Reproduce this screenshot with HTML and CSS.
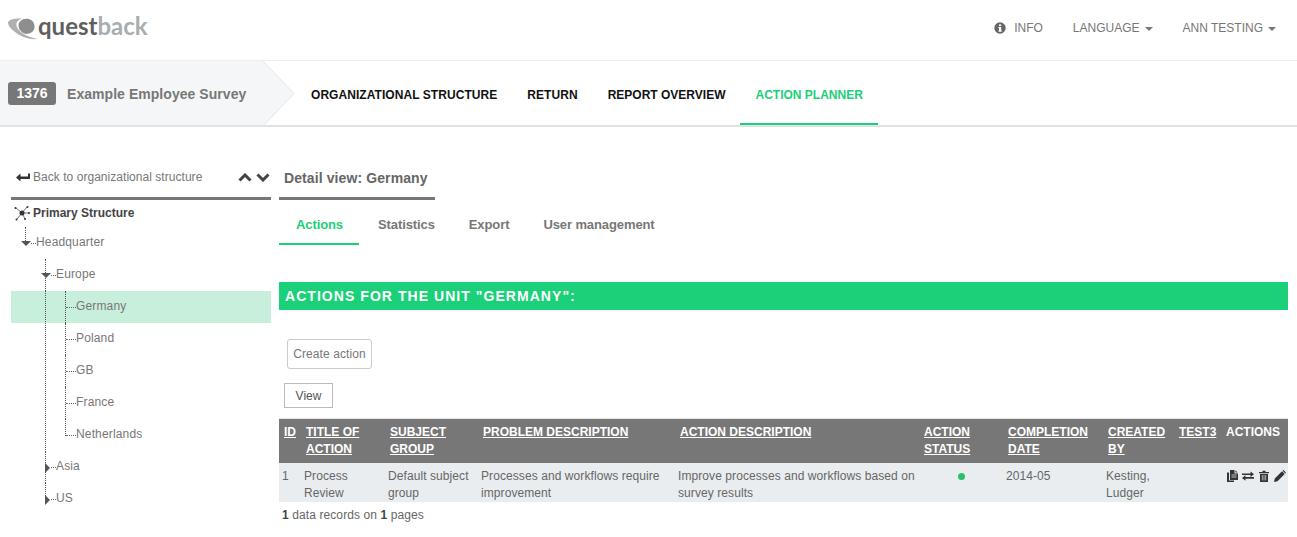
FILE: index.html
```html
<!DOCTYPE html>
<html lang="en">
<head>
<meta charset="utf-8">
<title>Questback</title>
<link rel="stylesheet" href="styles.css">
</head>
<body>
<header class="topbar">
  <a class="logo">
    <svg class="logo-mark" viewBox="0 0 30 22" width="30" height="22"><path d="M0 4C2 1 8 0 14 .5C9 2 7 6 9.500 10C12 15 20 19 30 21C20 22 12 18 7 14C3 11 0 8 0 4z" fill="#b0b0b0"/><path d="M14.500 1.500C20-.5 26 2 26.500 8C27 13 23 16 18 16C14 15 10.500 12 10.500 7C10.500 5 12 3 14.500 1.500z" fill="#8e8e8e"/></svg>
    <span class="logo-text"><span class="logo-dark">quest</span><span class="logo-light">back</span></span>
  </a>
  <nav class="topnav">
    <a class="topnav-item"><svg class="info-icon" viewBox="0 0 12 12" width="12" height="12"><circle cx="6" cy="6" r="5.700" fill="#666"/><rect x="5" y="5" width="2.200" height="4.400" fill="#fff"/><rect x="4.400" y="5" width="1.500" height="1" fill="#fff"/><rect x="4.400" y="8.600" width="3.400" height="1" fill="#fff"/><rect x="5" y="2.400" width="2.200" height="1.700" fill="#fff"/></svg>INFO</a>
    <a class="topnav-item">LANGUAGE<span class="caret"></span></a>
    <a class="topnav-item">ANN TESTING<span class="caret"></span></a>
  </nav>
</header>

<div class="crumbbar">
  <div class="survey">
    <span class="survey-id">1376</span>
    <span class="survey-name">Example Employee Survey</span>
    <svg class="survey-arrow" viewBox="0 0 32 65" width="32" height="65" preserveAspectRatio="none"><path d="M0 0L31 32.500 0 65z" fill="#f5f6f8"/><path d="M0 0L31 32.500 0 65" fill="none" stroke="#e6e6e6"/></svg>
  </div>
  <nav class="mainnav">
    <a class="mainnav-item">ORGANIZATIONAL STRUCTURE</a>
    <a class="mainnav-item">RETURN</a>
    <a class="mainnav-item tight">REPORT OVERVIEW</a>
    <a class="mainnav-item tight active">ACTION PLANNER</a>
  </nav>
</div>

<div class="page">
  <aside class="sidebar">
    <div class="side-head">
      <a class="back">
        <svg viewBox="0 0 14 10" width="14" height="10"><path d="M0 5.500L4.500 1.500V4.500H12V1.500H14V7H4.500V9.500z" fill="#333"/></svg>
        Back to organizational structure
      </a>
      <span class="chevrons">
        <svg viewBox="0 0 14 9" width="14" height="9"><path d="M1.500 7.500L7 2l5.500 5.500" fill="none" stroke="#444" stroke-width="3"/></svg>
        <svg viewBox="0 0 14 9" width="14" height="9"><path d="M1.500 1.500L7 7l5.500-5.500" fill="none" stroke="#444" stroke-width="3"/></svg>
      </span>
    </div>
    <div class="tree-root">
      <svg viewBox="0 0 16 16" width="16" height="16"><g stroke="#555" stroke-width=".8"><path d="M8 8L2 3M8 8L13 2M8 8L3 14M8 8L15 8M8 8L11 14"/></g><circle cx="8" cy="8" r="2.500" fill="#333"/><circle cx="1.500" cy="3" r="1" fill="#333"/><circle cx="13.500" cy="2" r="1" fill="#333"/><circle cx="2.500" cy="14.500" r="1" fill="#333"/><circle cx="15" cy="8" r="1" fill="#333"/><circle cx="11" cy="14" r="1" fill="#333"/></svg>
      Primary Structure
    </div>
    <ul class="tree">
      <li class="node lvl1"><i class="tog down"></i>Headquarter</li>
      <li class="node lvl2 open"><i class="tog down"></i>Europe</li>
      <li class="node lvl3 selected">Germany</li>
      <li class="node lvl3">Poland</li>
      <li class="node lvl3">GB</li>
      <li class="node lvl3">France</li>
      <li class="node lvl3 last">Netherlands</li>
      <li class="node lvl2 closed"><i class="tog right"></i>Asia</li>
      <li class="node lvl2 closed end"><i class="tog right"></i>US</li>
    </ul>
  </aside>

  <main class="content">
    <div class="detail-head"><span class="detail-title">Detail view: Germany</span></div>
    <nav class="tabs">
      <a class="tab active">Actions</a>
      <a class="tab">Statistics</a>
      <a class="tab">Export</a>
      <a class="tab">User management</a>
    </nav>
    <h2 class="unit-title">ACTIONS FOR THE UNIT "GERMANY":</h2>
    <button class="btn-create">Create action</button>
    <button class="btn-view">View</button>
    <table class="actions">
      <colgroup>
        <col class="c-id"><col class="c-title"><col class="c-subject"><col class="c-problem"><col class="c-action"><col class="c-status"><col class="c-date"><col class="c-by"><col class="c-test"><col class="c-acts">
      </colgroup>
      <thead>
        <tr>
          <th><a>ID</a></th>
          <th><a>TITLE OF ACTION</a></th>
          <th><a>SUBJECT GROUP</a></th>
          <th><a>PROBLEM DESCRIPTION</a></th>
          <th><a>ACTION DESCRIPTION</a></th>
          <th><a>ACTION STATUS</a></th>
          <th><a>COMPLETION DATE</a></th>
          <th><a>CREATED BY</a></th>
          <th><a>TEST3</a></th>
          <th>ACTIONS</th>
        </tr>
      </thead>
      <tbody>
        <tr>
          <td>1</td>
          <td>Process Review</td>
          <td>Default subject group</td>
          <td>Processes and workflows require improvement</td>
          <td>Improve processes and workflows based on survey results</td>
          <td class="status"><span class="dot"></span></td>
          <td>2014-05</td>
          <td>Kesting, Ludger</td>
          <td></td>
          <td class="row-icons">
            <div class="icon-row">
            <svg viewBox="0 0 12 12" width="12" height="12"><path d="M4 0h4.500v3.500H12V10H4zM9.500 0.300L11.700 2.500H9.500z" fill="#333"/><path d="M1 2.500h2V10.500h5V12H1z" fill="#333"/><path d="M5.500 5h5M5.500 7h5" stroke="#fff" stroke-width=".7"/></svg>
            <svg viewBox="0 0 12 12" width="12" height="12"><path d="M0 3.500h8.500V1.500L12 4.300 8.500 7V5H0zM12 7H3.500V5.300L0 8l3.500 2.800V8.700H12z" fill="#333"/></svg>
            <svg viewBox="0 0 12 12" width="12" height="12"><path d="M1 2h3.500V.7h3V2H11v1.300H1zM2 4h8v8H2z" fill="#333"/><path d="M4.300 5v5.500M6 5v5.500M7.700 5v5.500" stroke="#fff" stroke-width=".6"/></svg>
            <svg viewBox="0 0 12 12" width="12" height="12"><path d="M0 12l.8-3.500L8 1.300 10.700 4 3.500 11.200zM8.800.5l.7-.4 2.400 2.400-.4.700-.2.300L8.600 .8z" fill="#333"/></svg>
            </div>
          </td>
        </tr>
      </tbody>
    </table>
    <p class="records"><b>1</b> data records on <b>1</b> pages</p>
  </main>
</div>
</body>
</html>
```

FILE: styles.css
```css
* { box-sizing: border-box; }
html, body { margin: 0; padding: 0; }
body {
  font-family: "Liberation Sans", Arial, sans-serif;
  font-size: 12px;
  color: #666;
  background: #fff;
  width: 1297px;
  height: 537px;
  overflow: hidden;
}
a { color: inherit; text-decoration: none; }

.topbar {
  height: 61px;
  display: flex;
  align-items: center;
  justify-content: space-between;
  padding: 0 21px 6px 8px;
  border-bottom: 1px solid #eee;
}
.logo { display: flex; align-items: center; }
.logo-mark { display: block; margin-top: 4px; margin-right: 0; }
.logo-text { font-family: "Lato", sans-serif; font-weight: 700; font-size: 24px; line-height: 24px; margin-top: -2px; }
.logo-dark { color: #5f5f5f; }
.logo-light { color: #a8adb0; }
.topnav { display: flex; gap: 30px; padding-top: 2px; }
.topnav-item { display: flex; align-items: center; color: #777; font-size: 12px; }
.info-icon { margin-right: 8px; }
.caret {
  margin-left: 5px;
  width: 0; height: 0;
  border-left: 4px solid transparent;
  border-right: 4px solid transparent;
  border-top: 4px solid #777;
  margin-top: 2px;
}

.crumbbar {
  height: 66px;
  display: flex;
  border-bottom: 2px solid #e2e2e2;
}
.survey {
  position: relative;
  width: 263px;
  background: #f5f6f8;
  display: flex;
  align-items: center;
  padding-left: 8px;
  gap: 11px;
}
.survey-id {
  background: #777;
  color: #fff;
  font-weight: 700;
  font-size: 14px;
  line-height: 23px;
  height: 23px;
  width: 48px;
  text-align: center;
  border-radius: 3px;
}
.survey-name { color: #777; font-weight: 700; font-size: 14px; letter-spacing: .05px; line-height: 20px; padding-top: 2px; white-space: nowrap; }
.survey-arrow { position: absolute; left: 263px; top: 0; }
.mainnav { display: flex; padding-left: 33px; }
.mainnav-item {
  color: #111;
  font-weight: 700;
  font-size: 12px;
  letter-spacing: .06px;
  padding: 0 15px;
  line-height: 68px;
  height: 64px;
  border-bottom: 2px solid transparent;
}
.mainnav-item.tight { letter-spacing: 0; }
.mainnav-item.active { color: #1ad078; border-bottom-color: #1ad078; }

.page { display: flex; padding: 34px 9px 0 11px; gap: 8px; }
.sidebar { width: 260px; flex: none; }
.side-head {
  height: 39px;
  border-bottom: 3px solid #777;
  display: flex;
  align-items: center;
  justify-content: space-between;
  padding: 0 1px 4px 5px;
  font-size: 12px;
  letter-spacing: .04px;
  color: #777;
}
.back { display: flex; align-items: center; gap: 3px; }
.chevrons { display: flex; gap: 4px; }
.chevrons svg { display: block; }
.tree-root {
  display: flex;
  align-items: center;
  gap: 3px;
  height: 27px;
  padding: 0 0 1px 3px;
  font-weight: 700;
  color: #444;
}
.tree { list-style: none; margin: 0; padding: 0; }
.node {
  position: relative;
  height: 32px;
  line-height: 30px;
  color: #777;
  letter-spacing: .15px;
}
.node::before {
  content: "";
  position: absolute;
  top: 16px;
  height: 0;
  border-top: 1px dotted #666;
}
.node::after {
  content: "";
  position: absolute;
  top: 0;
  border-left: 1px dotted #555;
}
.lvl1 { padding-left: 25px; }
.lvl2 { padding-left: 45px; }
.lvl3 { padding-left: 65px; }
.lvl1::before { left: 20px; width: 5px; }
.lvl2::before { left: 40px; width: 5px; }
.lvl3::before { left: 55px; width: 10px; }
.lvl1::after { left: 14px; height: 14px; }
.lvl2::after { left: 34px; height: 32px; }
.lvl2.end::after { height: 21px; }
.lvl3::after { left: 54px; height: 32px; }
.lvl3.last::after { height: 17px; }
.lvl3 {
  background-image: repeating-linear-gradient(to bottom, #555 0 1px, transparent 1px 2px);
  background-size: 1px 100%;
  background-repeat: no-repeat;
  background-position: 34px 0;
}
.selected { background-color: #c8efdb; }

.tog { position: absolute; width: 0; height: 0; z-index: 1; }
.tog.down {
  top: 14px;
  border-left: 5px solid transparent;
  border-right: 5px solid transparent;
  border-top: 5px solid #555;
}
.lvl1 .tog.down { left: 10px; }
.lvl2 .tog.down { left: 30px; }
.tog.right {
  left: 34px;
  top: 12px;
  border-top: 5px solid transparent;
  border-bottom: 5px solid transparent;
  border-left: 5px solid #555;
}

.content { flex: 1; min-width: 0; display: flex; flex-direction: column; align-items: flex-start; }
.detail-head {
  width: 156px;
  height: 39px;
  border-bottom: 3px solid #777;
  padding: 9px 0 0 5px;
  font-size: 14px;
  font-weight: 700;
  letter-spacing: .1px;
  color: #666;
  white-space: nowrap;
}
.tabs { display: flex; margin-top: 9px; height: 36px; }
.tab {
  color: #777;
  font-weight: 700;
  font-size: 13px;
  letter-spacing: -.1px;
  line-height: 32px;
  padding: 0 17px;
  height: 36px;
  border-bottom: 2px solid transparent;
}
.tab.active { color: #1ad078; border-bottom-color: #1ad078; padding-right: 16px; margin-right: 2px; }
.unit-title {
  width: 100%;
  margin: 37px 0 0;
  background: #1ad078;
  color: #fff;
  font-size: 14px;
  font-weight: 700;
  letter-spacing: 1.05px;
  height: 28px;
  line-height: 28px;
  padding-left: 6px;
}
.btn-create {
  margin: 29px 0 0 8px;
  width: 85px;
  height: 30px;
  background: #fff;
  border: 1px solid #ccc;
  border-radius: 3px;
  color: #777;
  font: 12px "Liberation Sans", Arial, sans-serif;
  letter-spacing: .1px;
  padding: 0;
}
.btn-view {
  margin: 14px 0 0 5px;
  width: 49px;
  height: 25px;
  background: #fff;
  border: 1px solid #bbb;
  border-radius: 0;
  color: #555;
  font: 12px "Liberation Sans", Arial, sans-serif;
  padding: 0;
}
.actions {
  width: 100%;
  table-layout: fixed;
  border-collapse: collapse;
  margin-top: 10px;
}
.c-id { width: 22px; } .c-title { width: 84px; } .c-subject { width: 93px; } .c-problem { width: 197px; }
.c-action { width: 244px; } .c-status { width: 84px; } .c-date { width: 100px; } .c-by { width: 71px; }
.c-test { width: 47px; } .c-acts { width: 67px; }
.actions th {
  background: #777;
  color: #fff;
  font-size: 12px;
  font-weight: 700;
  text-align: left;
  vertical-align: top;
  line-height: 17px;
  padding: 5px 0 5px 5px;
  border-top: 1px solid #e4e4e4;
}
.actions th a { text-decoration: underline; }
.actions td {
  background: #e9edf0;
  color: #666;
  line-height: 17px;
  letter-spacing: .08px;
  padding: 5px 3px 0 3px;
  vertical-align: top;
}
.actions td.status { text-align: center; padding-top: 9px; line-height: 8px; }
.dot { display: inline-block; width: 7px; height: 7px; border-radius: 50%; background: #2bbf6a; }
.actions td.row-icons { padding: 7px 0 0 5px; }
.icon-row { display: flex; gap: 4px; }
.records { margin: 5px 0 0 3px; color: #666; line-height: 17px; letter-spacing: .1px; }
.records b { color: #444; }
```
